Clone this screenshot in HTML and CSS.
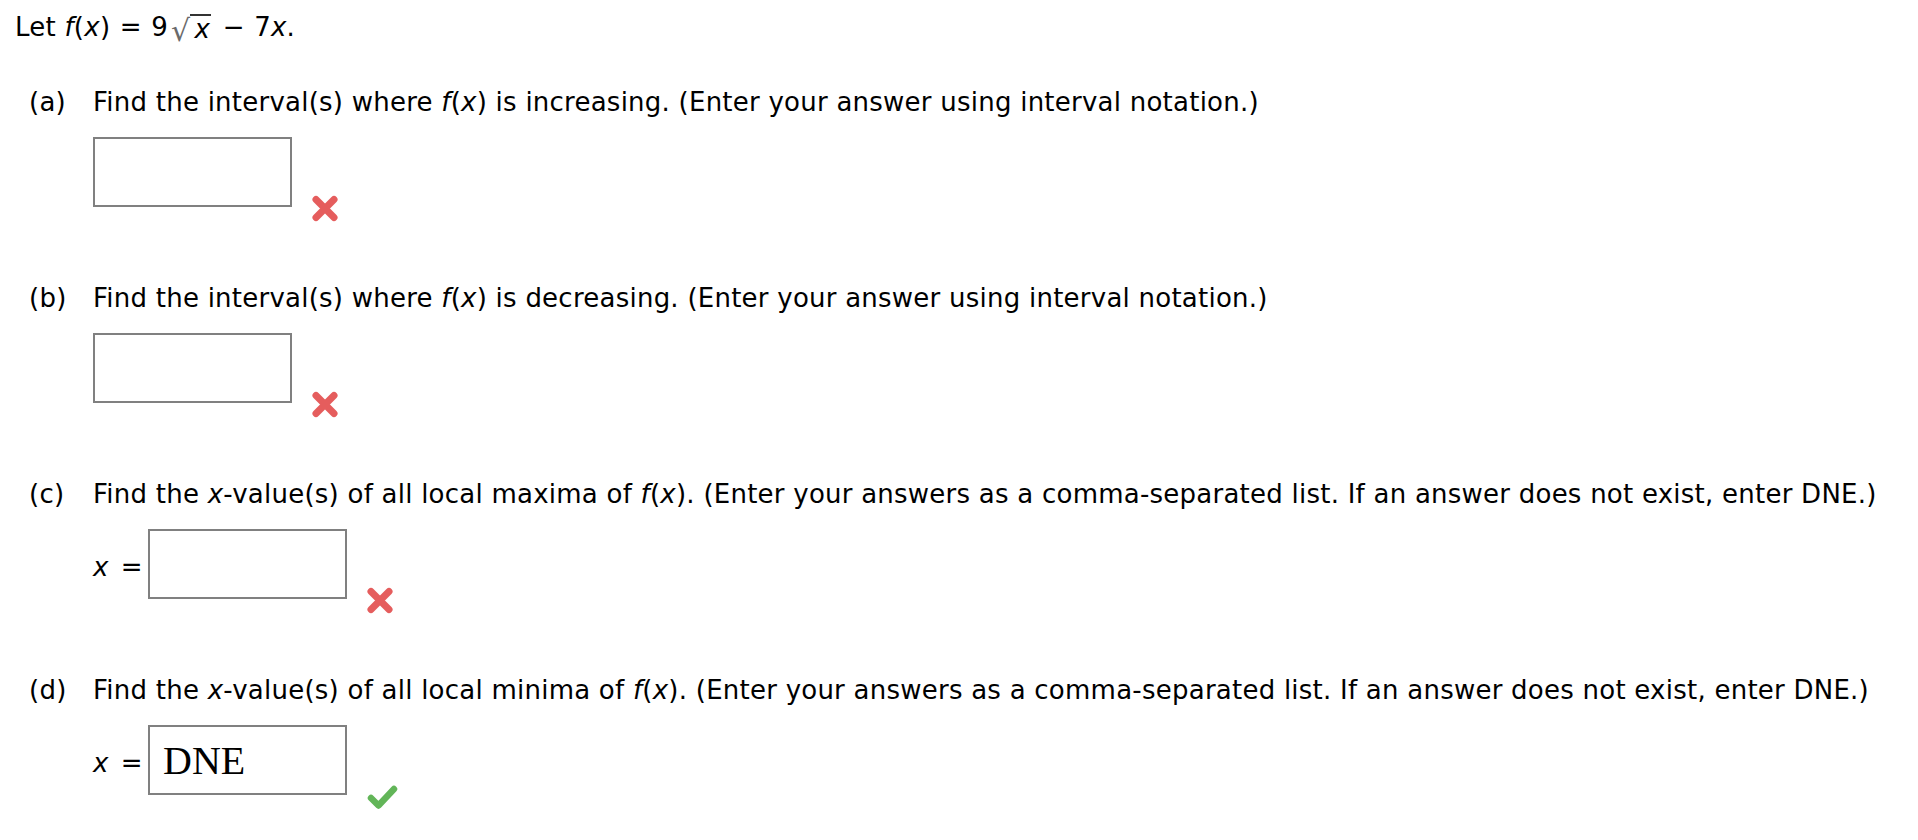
FILE: index.html
```html
<!DOCTYPE html>
<html>
<head>
<meta charset="utf-8">
<link rel="stylesheet" href="styles.css">
</head>
<body>
<div class="page">
  <p class="stem">Let <i>f</i>(<i>x</i>) <span class="op">=</span> 9<span class="sqrt"><span class="rad">√</span><span class="radicand"><i>x</i></span></span> <span class="op">−</span> 7<i>x</i>.</p>

  <div class="part">
    <div class="q"><span class="label">(a)</span><span class="qtext">Find the interval(s) where <i>f</i>(<i>x</i>) is increasing. (Enter your answer using interval notation.)</span></div>
    <div class="answer">
      <div class="box"></div>
      <svg class="mark wrong" width="26" height="27" viewBox="0 0 26 27"><path d="M4 4.5 L22 22.5 M22 4.5 L4 22.5"/></svg>
    </div>
  </div>

  <div class="part">
    <div class="q"><span class="label">(b)</span><span class="qtext">Find the interval(s) where <i>f</i>(<i>x</i>) is decreasing. (Enter your answer using interval notation.)</span></div>
    <div class="answer">
      <div class="box"></div>
      <svg class="mark wrong" width="26" height="27" viewBox="0 0 26 27"><path d="M4 4.5 L22 22.5 M22 4.5 L4 22.5"/></svg>
    </div>
  </div>

  <div class="part">
    <div class="q"><span class="label">(c)</span><span class="qtext">Find the <i>x</i>-value(s) of all local maxima of <i>f</i>(<i>x</i>). (Enter your answers as a comma-separated list. If an answer does not exist, enter DNE.)</span></div>
    <div class="answer">
      <span class="var"><i>x</i><span class="eq">=</span></span>
      <div class="box"></div>
      <svg class="mark wrong" width="26" height="27" viewBox="0 0 26 27"><path d="M4 4.5 L22 22.5 M22 4.5 L4 22.5"/></svg>
    </div>
  </div>

  <div class="part">
    <div class="q"><span class="label">(d)</span><span class="qtext">Find the <i>x</i>-value(s) of all local minima of <i>f</i>(<i>x</i>). (Enter your answers as a comma-separated list. If an answer does not exist, enter DNE.)</span></div>
    <div class="answer">
      <span class="var"><i>x</i><span class="eq">=</span></span>
      <div class="box filled"><span class="val">DNE</span></div>
      <svg class="mark right" width="31" height="26" viewBox="0 0 31 26"><path d="M4 14 L11.5 21.5 L27 5"/></svg>
    </div>
  </div>
</div>
</body>
</html>
```

FILE: styles.css
```css
html, body {
  margin: 0;
  padding: 0;
  background: #ffffff;
}

.page {
  font-family: "DejaVu Sans", Verdana, sans-serif;
  font-size: 26px;
  line-height: 30px;
  letter-spacing: 0.24px;
  color: #000000;
  padding: 11px 0 0 15px;
}

i {
  font-style: italic;
}

.stem {
  margin: 0;
  height: 30px;
  white-space: nowrap;
}

.stem .op {
  margin: 0 1px;
}

.sqrt {
  display: inline-flex;
  align-items: flex-end;
  margin-left: 3px;
  margin-right: 2px;
}

.rad {
  color: #6a6a6a;
  font-size: 30px;
  line-height: 30px;
  position: relative;
  top: 5px;
}

.radicand {
  border-top: 2px solid #333333;
  line-height: 26px;
  padding: 0 1px 0 4px;
  margin-bottom: -1px;
}

.part {
  height: 196px;
  padding-left: 14px;
}

.stem + .part {
  margin-top: 46px;
}

.q {
  display: flex;
  height: 30px;
  white-space: nowrap;
}

.label {
  width: 64px;
  flex: none;
}

.answer {
  display: flex;
  align-items: flex-start;
  margin-top: 20px;
  padding-left: 64px;
}

.var {
  height: 70px;
  display: flex;
  align-items: center;
  width: 55px;
  flex: none;
  padding-top: 5px;
  box-sizing: border-box;
}

.eq {
  margin-left: 12px;
}

.box {
  width: 199px;
  height: 70px;
  box-sizing: border-box;
  border: 2px solid #808080;
  background: #ffffff;
  flex: none;
}

.box.filled {
  display: flex;
  align-items: center;
  padding-left: 13px;
}

.val {
  font-family: "Liberation Serif", "Times New Roman", serif;
  font-size: 40px;
  line-height: 1;
  letter-spacing: 0;
  padding-top: 2px;
}

.mark {
  flex: none;
  margin-left: 20px;
}

.mark path {
  fill: none;
}

.mark.wrong {
  margin-top: 58px;
}

.mark.wrong path {
  stroke: #e55d5d;
  stroke-width: 7;
  stroke-linecap: round;
}

.mark.right {
  margin-top: 59px;
}

.mark.right path {
  stroke: #62b558;
  stroke-width: 6.5;
  stroke-linecap: round;
  stroke-linejoin: round;
}
```
